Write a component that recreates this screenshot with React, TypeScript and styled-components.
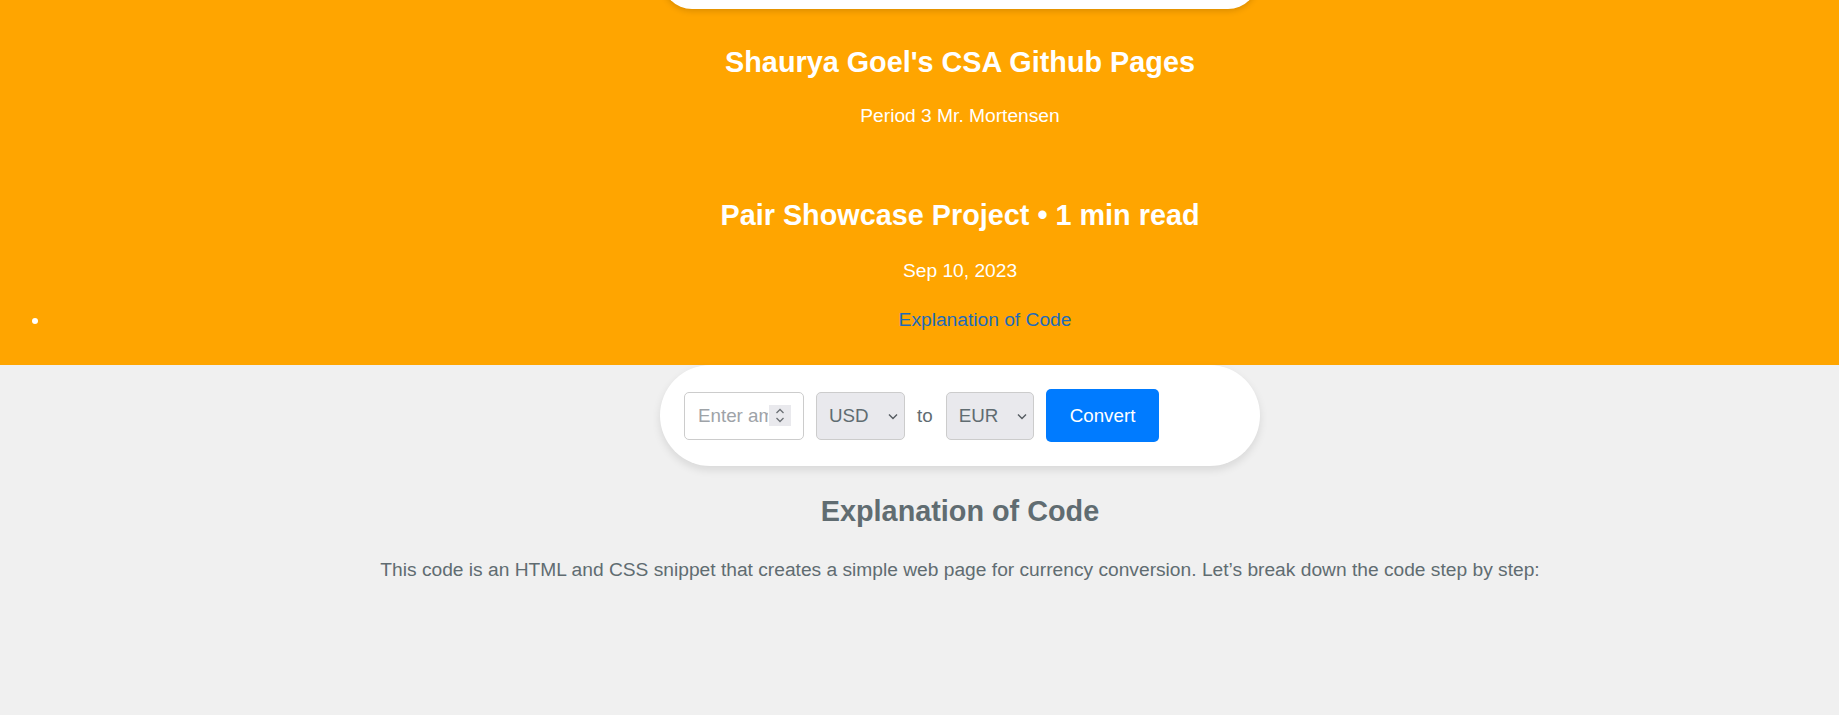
import React from "react";
import styled, { createGlobalStyle } from "styled-components";

const Global = createGlobalStyle`
  html, body {
    margin: 0;
    padding: 0;
    overflow: hidden;
    background: #f0f0f0;
  }
  body {
    font-family: "Liberation Sans", Arial, sans-serif;
    color: #606c71;
  }
`;

const Page = styled.div`
  width: 1920px;
  font-family: "Liberation Sans", Arial, sans-serif;
`;

const Header = styled.header`
  background: #ffa500;
  color: #ffffff;
  text-align: center;
  padding-bottom: 34px;
`;

const NavPill = styled.nav`
  width: 596px;
  height: 60px;
  margin: -51px auto 0;
  background: #ffffff;
  border-radius: 44px;
  box-shadow: 0 2px 6px rgba(0, 0, 0, 0.15);
`;

const Heading = styled.h1<{ $top: number }>`
  margin: ${(p) => p.$top}px 0 0;
  font-size: 28.8px;
  line-height: 34px;
  font-weight: 700;
  color: #ffffff;
`;

const SubLine = styled.p<{ $top: number }>`
  margin: ${(p) => p.$top}px 0 0;
  font-size: 19.2px;
  line-height: 22px;
  color: #ffffff;
`;

const TocList = styled.ul`
  margin: 27px 0 0;
  padding: 0 0 0 50px;
  list-style: disc outside;
  color: #ffffff;
`;

const TocItem = styled.li`
  text-align: center;
  font-size: 19.2px;
  line-height: 22px;
`;

const TocLink = styled.a`
  color: #1e6bb8;
  text-decoration: none;
`;

const Converter = styled.div`
  width: 600px;
  height: 101px;
  margin: 0 auto;
  box-sizing: border-box;
  padding: 0 24px;
  background: #ffffff;
  border-radius: 51px;
  box-shadow: 0 4px 8px rgba(0, 0, 0, 0.1);
  display: flex;
  align-items: center;
  gap: 12px;
`;

const Field = styled.div`
  position: relative;
  display: flex;
`;

const AmountInput = styled.input`
  box-sizing: border-box;
  width: 120px;
  height: 48px;
  padding: 0 35px 0 13px;
  border: 1px solid #cccccc;
  border-radius: 5px;
  font-family: "Liberation Sans", Arial, sans-serif;
  font-size: 18.77px;
  color: #606c71;
  background: #ffffff;
  outline: none;
  -moz-appearance: textfield;
  &::placeholder {
    color: #9ea3a8;
  }
  &::-webkit-inner-spin-button,
  &::-webkit-outer-spin-button {
    -webkit-appearance: none;
    margin: 0;
  }
`;

const Spinner = styled.span`
  position: absolute;
  right: 13px;
  top: 13px;
  width: 22px;
  height: 21px;
  background: #e9e9ed;
  display: flex;
  align-items: center;
  justify-content: center;
  pointer-events: none;
`;

const CurrencySelect = styled.select<{ $w: number }>`
  box-sizing: border-box;
  width: ${(p) => p.$w}px;
  height: 48px;
  padding: 0 24px 0 12px;
  border: 1px solid #cccccc;
  border-radius: 5px;
  background-color: #e9e9ed;
  appearance: none;
  -webkit-appearance: none;
  font-family: "Liberation Sans", Arial, sans-serif;
  font-size: 18.77px;
  color: #606c71;
`;

const Chevron = styled.svg`
  position: absolute;
  right: 7px;
  top: 21px;
  width: 10px;
  height: 7px;
  pointer-events: none;
`;

const ToLabel = styled.span`
  font-size: 18.77px;
  color: #606c71;
  margin-right: 1px;
`;

const ConvertButton = styled.button`
  box-sizing: border-box;
  height: 53px;
  padding: 0 24px;
  border: none;
  border-radius: 5px;
  background: #007bff;
  color: #ffffff;
  font-family: "Liberation Sans", Arial, sans-serif;
  font-size: 18.77px;
  cursor: pointer;
`;

const Content = styled.section`
  text-align: center;
  color: #606c71;
`;

const SectionTitle = styled.h2`
  margin: 28px 0 0;
  font-size: 28.8px;
  line-height: 34px;
  font-weight: 700;
  color: #606c71;
`;

const Paragraph = styled.p`
  margin: 31px 0 0;
  font-size: 19.2px;
  line-height: 22px;
`;

const SelectField = ({ value, width }: { value: string; width: number }) => (
  <Field>
    <CurrencySelect $w={width} defaultValue={value}>
      <option value="USD">USD</option>
      <option value="EUR">EUR</option>
      <option value="GBP">GBP</option>
    </CurrencySelect>
    <Chevron viewBox="0 0 10 7">
      <path d="M1 1.5 L5 5.5 L9 1.5" fill="none" stroke="#555b61" strokeWidth="1.4" />
    </Chevron>
  </Field>
);

export default function App() {
  return (
    <Page>
      <Global />
      <Header>
        <NavPill />
        <Heading $top={36}>Shaurya Goel's CSA Github Pages</Heading>
        <SubLine $top={26}>Period 3 Mr. Mortensen</SubLine>
        <Heading $top={71}>Pair Showcase Project • 1 min read</Heading>
        <SubLine $top={28}>Sep 10, 2023</SubLine>
        <TocList>
          <TocItem>
            <TocLink href="#explanation-of-code">Explanation of Code</TocLink>
          </TocItem>
        </TocList>
      </Header>
      <Converter>
        <Field>
          <AmountInput type="number" placeholder="Enter amount" />
          <Spinner>
            <svg width="10" height="17" viewBox="0 0 10 17">
              <path d="M1.5 6 L5 2.5 L8.5 6" fill="none" stroke="#6b7075" strokeWidth="1.3" />
              <path d="M1.5 11 L5 14.5 L8.5 11" fill="none" stroke="#6b7075" strokeWidth="1.3" />
            </svg>
          </Spinner>
        </Field>
        <SelectField value="USD" width={89} />
        <ToLabel>to</ToLabel>
        <SelectField value="EUR" width={88} />
        <ConvertButton>Convert</ConvertButton>
      </Converter>
      <Content>
        <SectionTitle id="explanation-of-code">Explanation of Code</SectionTitle>
        <Paragraph>
          This code is an HTML and CSS snippet that creates a simple web page for currency
          conversion. Let’s break down the code step by step:
        </Paragraph>
      </Content>
    </Page>
  );
}
